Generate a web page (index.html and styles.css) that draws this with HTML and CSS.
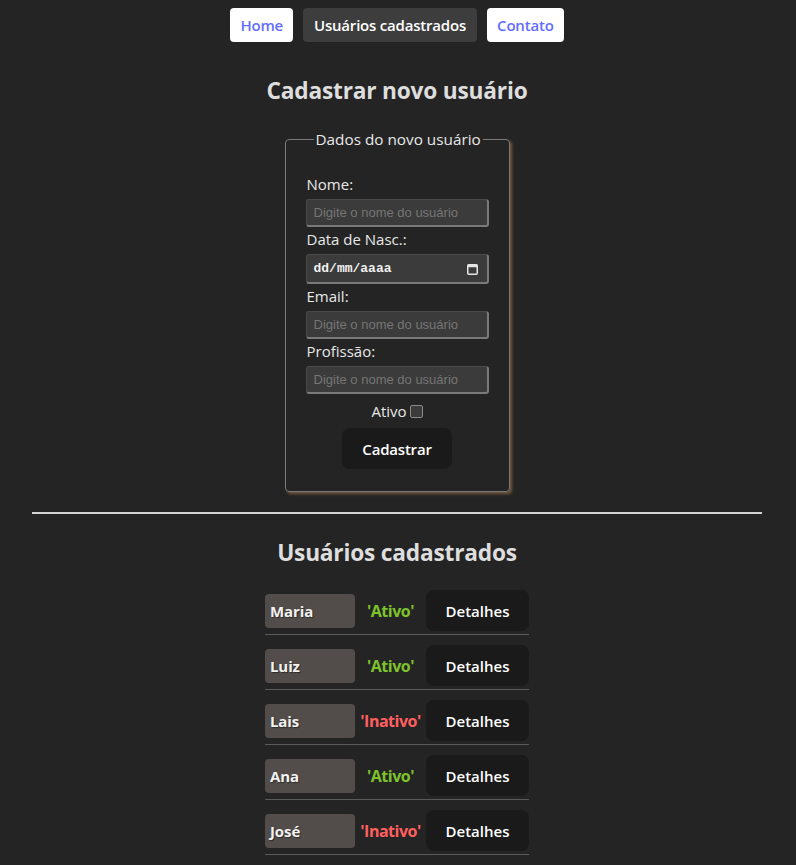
FILE: index.html
```html
<!DOCTYPE html>
<html lang="pt-BR">
<head>
<meta charset="utf-8">
<title>Cadastro</title>
<link rel="stylesheet" href="styles.css">
</head>
<body>
<nav class="nav">
  <a class="nav-btn nav-light">Home</a>
  <a class="nav-btn nav-dark">Usuários cadastrados</a>
  <a class="nav-btn nav-light">Contato</a>
</nav>
<h1 class="title">Cadastrar novo usuário</h1>
<form class="form">
  <fieldset class="box">
    <legend class="legend">Dados do novo usuário</legend>
    <label class="label">Nome:</label>
    <div class="field"><span class="ph">Digite o nome do usuário</span></div>
    <label class="label">Data de Nasc.:</label>
    <div class="field date"><span class="date-text">dd/mm/aaaa</span>
      <svg class="cal" width="11" height="12" viewBox="0 0 11 12"><rect x="0.75" y="1.75" width="9.5" height="9.5" rx="1" fill="none" stroke="#e6e6e6" stroke-width="1.5"/><rect x="0.75" y="1.75" width="9.5" height="2.5" fill="#e6e6e6"/></svg>
    </div>
    <label class="label">Email:</label>
    <div class="field"><span class="ph">Digite o nome do usuário</span></div>
    <label class="label">Profissão:</label>
    <div class="field"><span class="ph">Digite o nome do usuário</span></div>
    <div class="check-row"><span>Ativo</span><span class="check"></span></div>
    <button type="button" class="btn submit">Cadastrar</button>
  </fieldset>
</form>
<hr class="rule">
<h2 class="title sub">Usuários cadastrados</h2>
<ul class="list">
  <li class="row"><span class="name">Maria</span><span class="status on">'Ativo'</span><button class="btn details">Detalhes</button></li>
  <li class="row"><span class="name">Luiz</span><span class="status on">'Ativo'</span><button class="btn details">Detalhes</button></li>
  <li class="row"><span class="name">Lais</span><span class="status off">'Inativo'</span><button class="btn details">Detalhes</button></li>
  <li class="row"><span class="name">Ana</span><span class="status on">'Ativo'</span><button class="btn details">Detalhes</button></li>
  <li class="row"><span class="name">José</span><span class="status off">'Inativo'</span><button class="btn details">Detalhes</button></li>
</ul>
</body>
</html>
```
FILE: styles.css
```css
* { box-sizing: border-box; }
html, body { margin: 0; padding: 0; }
body {
  background: #242424;
  color: rgba(255,255,255,0.87);
  font-family: "Open Sans", "Noto Sans", sans-serif;
  font-size: 16px;
  padding-right: 2px;
}
.nav {
  display: flex;
  justify-content: center;
  gap: 10px;
  padding-top: 8px;
}
.nav-btn {
  height: 34px;
  padding: 0 10px;
  display: flex;
  align-items: center;
  border-radius: 4px;
  font-weight: 600;
  font-size: 15px;
  letter-spacing: -0.2px;
}
.nav-light { background: #fff; color: #646cff; }
.nav-dark { background: #3d3d3d; color: #fff; padding: 0 11px; }
.title {
  margin: 34px 0 0;
  text-align: center;
  font-size: 22.7px;
  line-height: 29px;
  font-weight: 700;
  color: #dedede;
  letter-spacing: -0.2px;
}
.form { display: flex; justify-content: center; margin-top: 23px; }
.box {
  margin: 0;
  width: 225px;
  padding: 22px 20px 22px 20px;
  border: 1px solid #7a7a7a;
  border-radius: 4px;
  box-shadow: 2px 2px 3px rgba(140,105,70,0.75);
  display: flex;
  flex-direction: column;
  align-items: stretch;
  font-size: 15px;
}
.legend {
  padding: 0 2px;
  margin-left: 8px;
  line-height: 22px;
  font-size: 15.3px;
  color: #e8e8e8;
}
.label {
  display: block;
  padding-top: 1px;
  line-height: 22px;
  margin-bottom: 4px;
  padding-left: 1px;
  color: #e8e8e8;
}
.field {
  height: 28px;
  background: #3b3b3b;
  border: 1px solid #4a4a4a;
  border-right: 2px solid #7a7a7a;
  border-bottom: 2px solid #7a7a7a;
  border-radius: 3px;
  display: flex;
  align-items: center;
  padding-left: 7px;
}
.ph {
  font-family: "Liberation Sans", Arial, sans-serif;
  font-size: 13px;
  color: #757575;
}
.date { height: 30px; justify-content: space-between; padding-right: 9px; }
.date-text {
  font-family: "Liberation Mono", monospace;
  font-size: 13px;
  font-weight: 700;
  color: #f0f0f0;
}
.cal { display: block; }
.check-row {
  margin-top: 6px;
  display: flex;
  justify-content: center;
  align-items: center;
  gap: 2px;
  line-height: 22px;
  color: #e8e8e8;
}
.check {
  width: 13px;
  height: 13px;
  border: 1px solid #8a8a8a;
  border-radius: 2px;
  background: #3b3b3b;
  margin-left: 1px;
}
.btn {
  border: none;
  background: #1a1a1a;
  color: #fff;
  border-radius: 8px;
  font-family: "Open Sans", "Noto Sans", sans-serif;
  font-size: 15px;
  font-weight: 600;
  letter-spacing: -0.2px;
  height: 41px;
  padding: 0;
}
.submit { width: 110px; align-self: center; margin-top: 6px; }
.rule {
  width: 730px;
  margin: 20px auto 0;
  height: 0;
  border: none;
  border-top: 2px solid #d4d4d4;
}
.sub { margin-top: 24px; margin-bottom: 13px; }
.list {
  list-style: none;
  margin: 0 auto;
  padding: 0;
  width: 264px;
}
.row {
  display: flex;
  align-items: center;
  padding: 10px 0 3px;
  border-bottom: 1px solid #5a5a5a;
}
.name {
  width: 90px;
  height: 34px;
  background: #524d4a;
  border-radius: 4px;
  display: flex;
  align-items: center;
  padding-left: 5px;
  font-weight: 700;
  font-size: 15px;
  color: #f2f2f2;
  text-shadow: 1px 1px 1px rgba(0,0,0,0.45);
  letter-spacing: -0.1px;
}
.status {
  width: 71px;
  text-align: center;
  font-weight: 700;
  font-size: 16px;
  letter-spacing: -0.5px;
}
.on { color: #7ec22c; }
.off { color: #ff5f5f; }
.details { width: 103px; letter-spacing: 0; }
```
